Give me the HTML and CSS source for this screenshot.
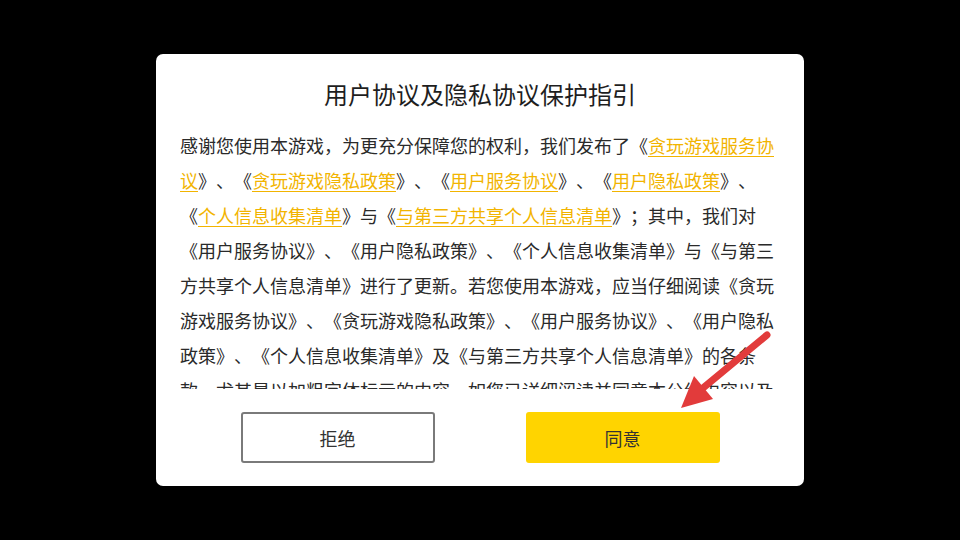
FILE: index.html
```html
<!DOCTYPE html>
<html lang="zh-CN">
<head>
<meta charset="utf-8">
<title>用户协议及隐私协议保护指引</title>
<link rel="stylesheet" href="styles.css">
</head>
<body>
<div class="dialog">
  <h1 class="title">用户协议及隐私协议保护指引</h1>
  <div class="content">
    <p class="text">感谢您使用本游戏，为更充分保障您的权利，我们发布了《<a class="link">贪玩游戏服务协议</a>》、《<a class="link">贪玩游戏隐私政策</a>》、《<a class="link">用户服务协议</a>》、《<a class="link">用户隐私政策</a>》、《<a class="link">个人信息收集清单</a>》与《<a class="link">与第三方共享个人信息清单</a>》；其中，我们对《用户服务协议》、《用户隐私政策》、《个人信息收集清单》与《与第三方共享个人信息清单》进行了更新。若您使用本游戏，应当仔细阅读《贪玩游戏服务协议》、《贪玩游戏隐私政策》、《用户服务协议》、《用户隐私政策》、《个人信息收集清单》及《与第三方共享个人信息清单》的各条款，尤其是以加粗字体标示的内容，如您已详细阅读并同意本公约内容以及上述协议，请点击“同意”开始使用我们的产品和服务。</p>
  </div>
  <div class="actions">
    <button class="btn btn-reject">拒绝</button>
    <button class="btn btn-agree">同意</button>
  </div>
</div>
<svg class="arrow" width="960" height="540" viewBox="0 0 960 540">
  <line x1="767" y1="335" x2="703" y2="388" stroke="#e23b3b" stroke-width="7" stroke-linecap="round"/>
  <polygon points="681,408 694,376 713,399" fill="#e23b3b"/>
</svg>
</body>
</html>
```

FILE: styles.css
```css
html, body {
  margin: 0;
  padding: 0;
}

body {
  width: 960px;
  height: 540px;
  background: #000;
  display: flex;
  justify-content: center;
  align-items: flex-start;
  padding-top: 54px;
  box-sizing: border-box;
  font-family: "Noto Sans CJK SC", "Noto Sans", sans-serif;
  position: relative;
  overflow: hidden;
  text-spacing-trim: space-all;
}

.dialog {
  width: 648px;
  height: 432px;
  box-sizing: border-box;
  background: #fff;
  border-radius: 7px;
  padding: 22px 24px 23px;
  display: flex;
  flex-direction: column;
}

.title {
  margin: 0;
  font-size: 24px;
  font-weight: 400;
  line-height: 36px;
  color: #1e1e1e;
  text-align: center;
}

.content {
  margin-top: 16px;
  height: 261px;
  overflow: hidden;
}

.text {
  margin: 0;
  font-size: 18px;
  line-height: 35px;
  color: #2a2a2a;
  text-align: left;
  text-spacing-trim: space-all;
}

.link {
  color: #f2b400;
  text-decoration: underline;
  text-decoration-thickness: 1px;
  text-underline-offset: 3px;
}

.actions {
  margin-top: 23px;
  display: flex;
  justify-content: center;
  gap: 91px;
}

.btn {
  width: 194px;
  height: 51px;
  box-sizing: border-box;
  border-radius: 3px;
  font-family: "Noto Sans CJK SC", "Noto Sans", sans-serif;
  font-size: 18px;
  color: #333;
  padding: 0;
}

.btn-reject {
  background: #fff;
  border: 2px solid #7a7a7a;
}

.btn-agree {
  background: #ffd400;
  border: none;
}

.arrow {
  position: absolute;
  left: 0;
  top: 0;
  pointer-events: none;
}
```
